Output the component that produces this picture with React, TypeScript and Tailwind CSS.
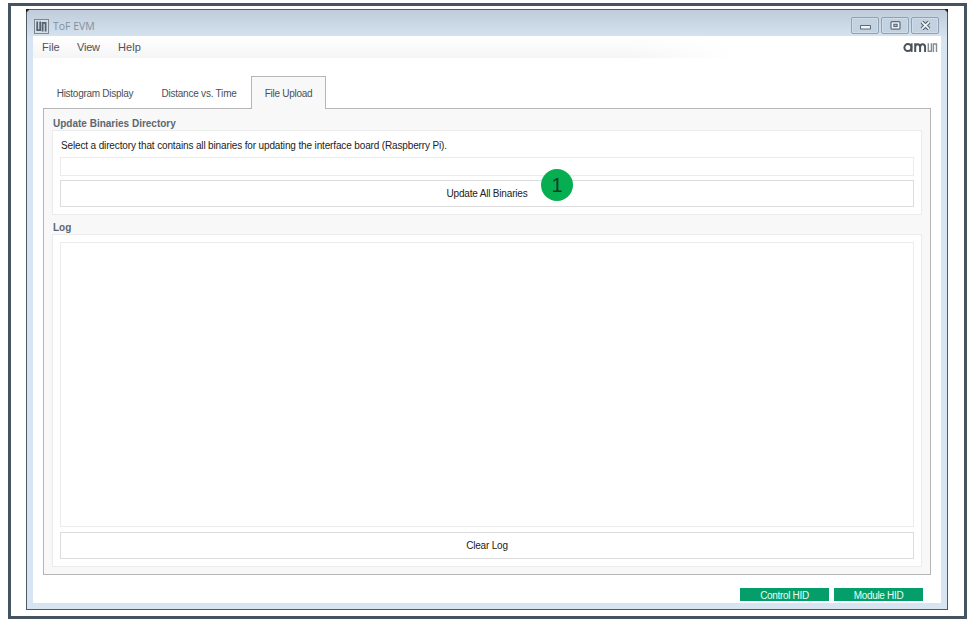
import type { ReactNode } from 'react';

const tabs = [
  { label: 'Histogram Display', className: 'w-[104px] border-transparent tracking-[-0.27px]' },
  { label: 'Distance vs. Time', className: 'w-[104px] border-transparent tracking-[-0.22px]' },
  { label: 'File Upload', className: 'w-[75px] border-[#b5b7b6] bg-[#f8f8f8] tracking-[-0.27px]' },
];

const AppIcon = () => (
  <svg className="h-[15px] w-[15px]" viewBox="0 0 15 15" fill="none">
    <rect x="0.5" y="0.5" width="14" height="14" fill="#d5dfe8" stroke="#7c8894" />
    <path d="M3.2 2.5v8.6h3V2.5" stroke="#566370" strokeWidth="1.8" />
    <path d="M8.6 12.5V3.9h3v8.6" stroke="#566370" strokeWidth="1.8" />
  </svg>
);

const BrandLogo = () => (
  <svg className="h-[13px] w-[35px]" viewBox="0 0 35 13" fill="none" stroke="#4b525a">
    <circle cx="4.9" cy="6.6" r="3.5" strokeWidth="2" />
    <path d="M8.6 2.2v8.9" strokeWidth="1.9" />
    <path
      d="M12.2 11.1V2.2M12.2 6.2c0-4.1 4.9-4.1 4.9 0v4.9M17.1 6.2c0-4.1 5-4.1 5 0v4.9"
      strokeWidth="2"
    />
    <path d="M25.3 2.2v8.1h3.1V2.2M30.4 11.1V3h3.1v8.1" stroke="#858b91" strokeWidth="1.4" />
  </svg>
);

const WindowButton = ({ children }: { children: ReactNode }) => (
  <button className="flex h-[17px] w-[28px] items-center justify-center rounded-[2px] border border-[#91a1b3] bg-[#c3d2e1] shadow-[inset_0_0_0_1px_#d0dce8]">
    <svg className="h-[9px] w-[11px]" viewBox="0 0 11 9" fill="none">
      {children}
    </svg>
  </button>
);

const TitleBar = () => (
  <header className="flex h-[26px] items-start justify-between bg-linear-to-b from-[#bfcddb] to-[#d4e1ee] pr-2 pl-[7px]">
    <div className="flex items-center gap-1 pt-2">
      <AppIcon />
      <h1 className="pt-px font-['Open_Sans',sans-serif] text-[10.5px] leading-[15px] text-[#83909c]">ToF EVM</h1>
    </div>
    <div className="flex gap-[2px] pt-[7px]">
      <WindowButton>
        <rect x="0.5" y="4.5" width="10" height="3.5" rx="0.5" fill="#f2f5f8" stroke="#5d6a79" strokeWidth="1.1" />
      </WindowButton>
      <WindowButton>
        <rect x="1" y="0.7" width="9" height="7.5" rx="1" fill="#f2f5f8" stroke="#5d6a79" strokeWidth="1.2" />
        <rect x="3.9" y="3.3" width="3.2" height="2.2" fill="#c3d2e1" stroke="#5d6a79" strokeWidth="1.2" />
      </WindowButton>
      <WindowButton>
        <path d="M2 1.1l7 6.8M9 1.1L2 7.9" stroke="#566372" strokeWidth="4" />
        <path d="M2 1.1l7 6.8M9 1.1L2 7.9" stroke="#f2f5f8" strokeWidth="1.8" />
      </WindowButton>
    </div>
  </header>
);

const GroupBox = ({ title, className, children }: { title: string; className: string; children: ReactNode }) => (
  <section>
    <h2 className="h-[14px] pl-px text-[10px] leading-[15px] font-bold text-[#5c6670]">{title}</h2>
    <div className={`flex flex-col border border-[#ebebeb] bg-white px-[7px] ${className}`}>{children}</div>
  </section>
);

const ActionButton = ({ children }: { children: ReactNode }) => (
  <button className="h-[27px] shrink-0 border border-[#dcdcdc] bg-white text-[10px] tracking-[-0.18px] text-[#222]">
    {children}
  </button>
);

const App = () => {
  return (
    <div className="h-[629px] w-[977px] overflow-hidden bg-white pt-[3px] pl-2 font-['Liberation_Sans',sans-serif]">
      <div className="h-[616px] w-[959px] border-3 border-[#465462] pt-[3px] pl-[15px]">
        <div className="relative h-[601px] w-[922px] bg-[#111820]">
          <div className="h-full overflow-hidden rounded-t-[5px] border border-[#515a63] bg-[#d7e4f1]">
            <TitleBar />
            <main className="mx-[6px] flex h-[567px] flex-col bg-white">
              <div className="flex h-[22px] justify-between bg-linear-to-b from-white to-[#f5f5f5]">
                <nav className="flex w-[590px] pl-[9px] text-[11px] leading-[22px] text-[#515151]">
                  <a className="w-[35px]">File</a>
                  <a className="w-[41px] tracking-[-0.2px]">View</a>
                  <a className="tracking-[0.1px]">Help</a>
                </nav>
                <div className="flex flex-1 justify-end bg-linear-to-r from-transparent to-white to-35% pt-[5px] pr-[3px]">
                  <BrandLogo />
                </div>
              </div>

              {/* Tabs */}
              <div className="relative mt-[18px] ml-[10px] flex h-[33px] text-[10px] text-[#4a5056]">
                {tabs.map((tab) => (
                  <button
                    key={tab.label}
                    className={`flex items-center justify-center border border-b-0 pt-px whitespace-nowrap ${tab.className}`}
                  >
                    {tab.label}
                  </button>
                ))}
              </div>

              {/* Tab content */}
              <div className="-mt-px mr-[10px] ml-[10px] flex h-[467px] flex-col border border-[#b5b7b6] bg-[#f8f8f8] px-2 pt-[7px]">
                <GroupBox title="Update Binaries Directory" className="h-[85px]">
                  <p className="h-[26px] pt-[8px] pl-px text-[10px] leading-[13px] tracking-[-0.14px] text-[#222]">
                    Select a directory that contains all binaries for updating the interface board (Raspberry Pi).
                  </p>
                  <input className="h-[19px] border border-[#ebebeb] bg-white" />
                  <div className="mt-[4px] flex flex-col">
                    <ActionButton>Update All Binaries</ActionButton>
                  </div>
                </GroupBox>
                <div className="mt-[5px]">
                  <GroupBox title="Log" className="h-[333px] gap-[5px] pt-[7px]">
                    <textarea className="h-[285px] resize-none border border-[#ebebeb] bg-white" />
                    <ActionButton>Clear Log</ActionButton>
                  </GroupBox>
                </div>
              </div>

              <footer className="mt-[13px] flex justify-end gap-[5px] pr-[18px] text-[10px] leading-[15px] tracking-[-0.32px] text-[#e8fff5]">
                <div className="h-[13px] w-[89px] bg-[#049e6b] text-center">Control HID</div>
                <div className="h-[13px] w-[89px] bg-[#049e6b] text-center">Module HID</div>
              </footer>
            </main>
          </div>
          <span className="absolute top-[160px] left-[515px] flex h-8 w-8 items-center justify-center rounded-full bg-[#06ae52] text-[20px] text-[#123c23]">
            1
          </span>
        </div>
      </div>
    </div>
  );
};

export default App;
